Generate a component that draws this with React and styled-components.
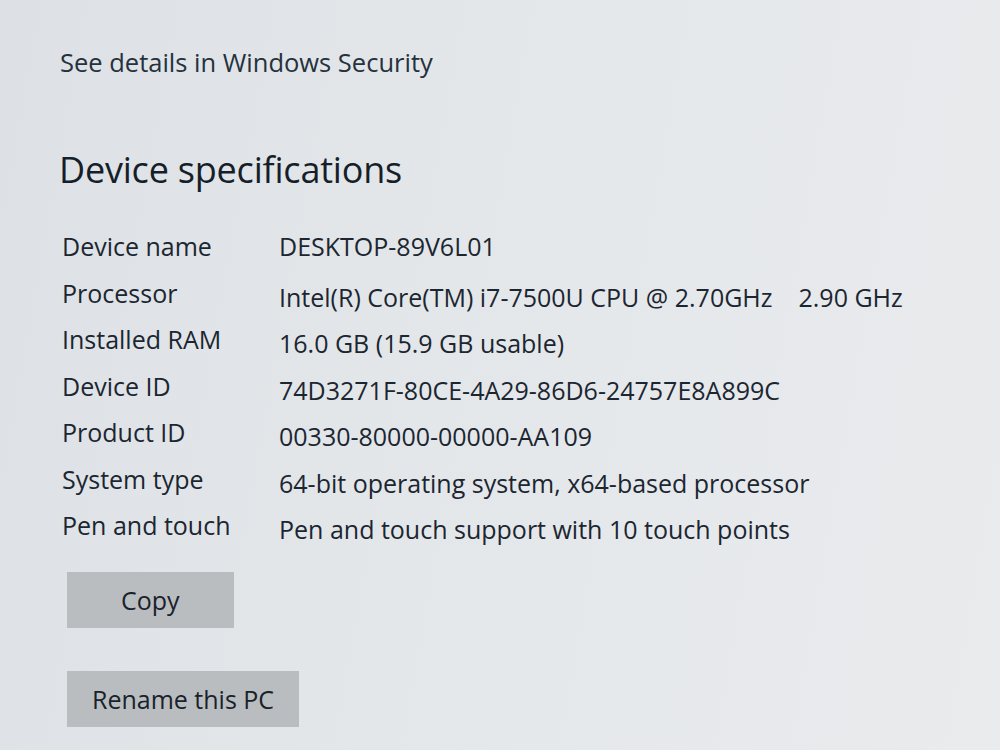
import React from 'react'
import styled, { createGlobalStyle } from 'styled-components'

const GlobalStyle = createGlobalStyle`
  html, body {
    margin: 0;
    padding: 0;
    width: 1000px;
    height: 750px;
    overflow: hidden;
  }
  body {
    background: linear-gradient(100deg, #dde1e5 0%, #e4e7ea 45%, #e9ebed 100%);
    font-family: "Open Sans", "Noto Sans", sans-serif;
    color: #1b2631;
  }
`

const Page = styled.div`
  width: 1000px;
  height: 750px;
  padding: 43px 0 0 60px;
  box-sizing: border-box;
  display: flex;
  flex-direction: column;
`

const Link = styled.div`
  font-size: 25.5px;
  line-height: 38px;
  color: #25313c;
`

const Heading = styled.h2`
  margin: 64px 0 0 -1px;
  font-size: 36px;
  font-weight: 400;
  line-height: 50px;
  color: #161f29;
  letter-spacing: -0.2px;
`

const SpecList = styled.dl`
  margin: 28px 0 0 2px;
  display: grid;
  grid-template-columns: 217px auto;
  grid-auto-rows: 46.5px;
  align-items: center;
`

const Label = styled.dt`
  font-size: 25px;
  color: #1b2631;
`

const Value = styled.dd`
  margin: 0;
  font-size: 25px;
  color: #1b2631;
  white-space: pre;
  transform: translateY(${p => p.$shift}px);
`

const Buttons = styled.div`
  margin: 23px 0 0 7px;
  display: flex;
  flex-direction: column;
  align-items: flex-start;
  gap: 43px;
`

const Button = styled.button`
  height: 56px;
  padding: 0 ${p => p.$pad}px;
  border: none;
  background: #b9bdc0;
  font-family: inherit;
  font-size: 25px;
  color: #19222b;
  cursor: pointer;
`

const specs = [
  ['Device name', 'DESKTOP-89V6L01'],
  ['Processor', 'Intel(R) Core(TM) i7-7500U CPU @ 2.70GHz    2.90 GHz'],
  ['Installed RAM', '16.0 GB (15.9 GB usable)'],
  ['Device ID', '74D3271F-80CE-4A29-86D6-24757E8A899C'],
  ['Product ID', '00330-80000-00000-AA109'],
  ['System type', '64-bit operating system, x64-based processor'],
  ['Pen and touch', 'Pen and touch support with 10 touch points'],
]

const App = () => {
  return (
    <>
      <GlobalStyle />
      <Page>
        <Link>See details in Windows Security</Link>
        <Heading>Device specifications</Heading>
        <SpecList>
          {specs.map(([k, v], i) => (
            <React.Fragment key={k}>
              <Label>{k}</Label>
              <Value $shift={i === 0 ? 0 : 4}>{v}</Value>
            </React.Fragment>
          ))}
        </SpecList>
        <Buttons>
          <Button $pad={54}>Copy</Button>
          <Button $pad={25}>Rename this PC</Button>
        </Buttons>
      </Page>
    </>
  )
}

export default App
